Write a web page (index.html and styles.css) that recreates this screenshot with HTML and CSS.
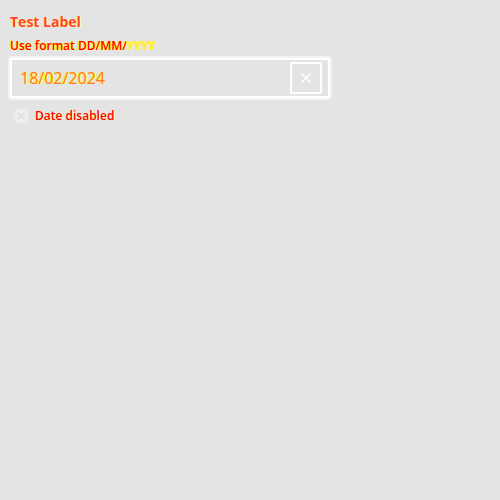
FILE: index.html
```html
<!DOCTYPE html>
<html lang="en">
<head>
<meta charset="utf-8">
<title>Date input</title>
<link rel="stylesheet" href="styles.css">
</head>
<body>
<div class="field">
  <label class="label" for="date">Test Label</label>
  <div class="hint" id="hint">Use format DD/MM/<span class="light">YYYY</span></div>
  <div class="control">
    <input class="input" id="date" type="text" value="18/02/2024" aria-describedby="hint error">
    <button class="clear" type="button" aria-label="Clear">
      <svg width="10" height="10" viewBox="0 0 20 20" fill="none" stroke="currentColor" stroke-width="3"><path d="M1 1l18 18M19 1L1 19"/></svg>
    </button>
  </div>
  <div class="error" id="error">
    <svg width="16" height="16" viewBox="0 0 32 32"><path fill="#eeeeee" d="M10 1h12L31 10v12L22 31H10L1 22V10z"/><path fill="none" stroke="#e0e0e0" stroke-width="3" d="M9 9l14 14M23 9L9 23"/></svg>
    <span>Date disabled</span>
  </div>
</div>
</body>
</html>
```
FILE: styles.css
```css
* {
  box-sizing: border-box;
}

body {
  margin: 0;
  padding: 10px;
  background: #e4e4e4;
  font-family: "Open Sans", sans-serif;
  color: #ff0000;
}

.field {
  display: flex;
  flex-direction: column;
  max-width: 320px;
}

.label {
  font-size: 14px;
  font-weight: 700;
  line-height: 24px;
  color: #ff4040;
  text-shadow: 1px 0 #ffffa0, -1px 0 #ffff60;
}

.hint {
  font-size: 12px;
  font-weight: 600;
  line-height: 24px;
  text-shadow: 1px 0 #ffff30, -1px 0 #ffff30;
}

.light {
  color: #ffe060;
}

.control {
  display: flex;
  align-items: center;
  height: 40px;
  padding: 0 6px 0 8px;
  border: 2px solid #ffffff;
  border-radius: 2px;
  box-shadow: 0 0 0 2px #f3f3f3;
}

.input {
  flex: 1;
  min-width: 0;
  padding: 0;
  border: 0;
  outline: 0;
  background: transparent;
  color: #ff7050;
  font: 16px/24px "Open Sans", sans-serif;
  text-shadow: 1px 0 #ffff20, -1px 0 #ffff20;
}

.clear {
  display: grid;
  place-items: center;
  width: 32px;
  height: 32px;
  padding: 0;
  border: 2px solid #ffffff;
  border-radius: 2px;
  background: transparent;
  color: #ffffff;
}

.error {
  display: flex;
  align-items: center;
  gap: 6px;
  margin-top: 8px;
  padding-left: 3px;
  font-size: 12px;
  font-weight: 600;
  line-height: 20px;
  text-shadow: 1px 0 #ffffa0;
}
```
